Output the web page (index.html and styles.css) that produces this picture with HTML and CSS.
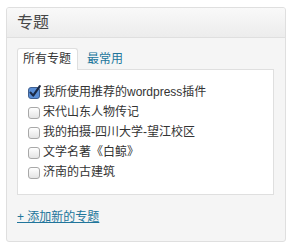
FILE: index.html
```html
<!DOCTYPE html>
<html lang="zh">
<head>
<meta charset="utf-8">
<link rel="stylesheet" href="styles.css">
</head>
<body>
<div class="box">
  <div class="box-head">专题</div>
  <div class="box-body">
    <div class="tabs">
      <span class="tab active">所有专题</span>
      <span class="tab">最常用</span>
    </div>
    <div class="panel">
      <label class="row"><span class="cb checked"><svg width="14" height="14" viewBox="0 0 14 14"><rect x="0.5" y="2.5" width="11" height="11" rx="2.5" fill="#5b8fd6" stroke="#3f5f8f"/><path d="M2.6 7.6 L5.2 10.6 L11.8 1.2" fill="none" stroke="#1b2a45" stroke-width="2.2" stroke-linecap="round" stroke-linejoin="round"/></svg></span><span class="txt">我所使用推荐的wordpress插件</span></label>
      <label class="row"><span class="cb"></span><span class="txt">宋代山东人物传记</span></label>
      <label class="row"><span class="cb"></span><span class="txt">我的拍摄-四川大学-望江校区</span></label>
      <label class="row"><span class="cb"></span><span class="txt">文学名著《白鲸》</span></label>
      <label class="row"><span class="cb"></span><span class="txt">济南的古建筑</span></label>
    </div>
    <a class="add" href="#">+ 添加新的专题</a>
  </div>
</div>
</body>
</html>
```
FILE: styles.css
```css
body {
  margin: 0;
  background: #fff;
  font-family: "Liberation Sans", "Noto Sans CJK SC", sans-serif;
  font-size: 12px;
  color: #333;
}
.box {
  margin: 7px 0 0 6px;
  width: 278px;
  height: 233px;
  border: 1px solid #dfdfdf;
  border-radius: 3px;
  background: #f5f5f5;
  overflow: hidden;
}
.box-head {
  height: 29px;
  line-height: 29px;
  padding-left: 10px;
  font-size: 16px;
  color: #464646;
  background: linear-gradient(#f9f9f9, #ececec);
  border-bottom: 1px solid #dfdfdf;
}
.box-body {
  padding: 10px 11px 0 10px;
}
.tabs {
  display: flex;
  align-items: flex-end;
  height: 21px;
  position: relative;
  z-index: 1;
}
.tab {
  height: 20px;
  line-height: 20px;
  padding: 0 5px 0 5px;
  color: #21759b;
  border: 1px solid transparent;
  border-bottom: none;
  margin-right: 3px;
}
.tab.active {
  color: #333;
  background: #fff;
  border-color: #dfdfdf;
  border-radius: 3px 3px 0 0;
  height: 21px;
  padding: 0 6px 0 5px;
  margin-bottom: -1px;
}
.panel {
  background: #fff;
  border: 1px solid #dfdfdf;
  padding: 12px 10px 12px 10px;
  height: 100px;
}
.row {
  display: flex;
  align-items: center;
  height: 20px;
  gap: 3px;
}
.cb {
  width: 10px;
  height: 10px;
  border: 1px solid #a8a8a8;
  border-radius: 3px;
  background: linear-gradient(#ffffff, #e4e4e4);
  flex: none;
  margin-top: 2px;
}
.cb.checked {
  width: 12px;
  height: 12px;
  border: none;
  background: none;
  margin-top: -2px;
  position: relative;
}
.cb.checked svg {
  position: absolute;
  left: 0;
  top: 0;
}
.txt {
  color: #333;
  line-height: 20px;
}
.add {
  display: inline-block;
  margin-top: 14px;
  line-height: 16px;
  color: #21759b;
  text-decoration: underline;
}
```
